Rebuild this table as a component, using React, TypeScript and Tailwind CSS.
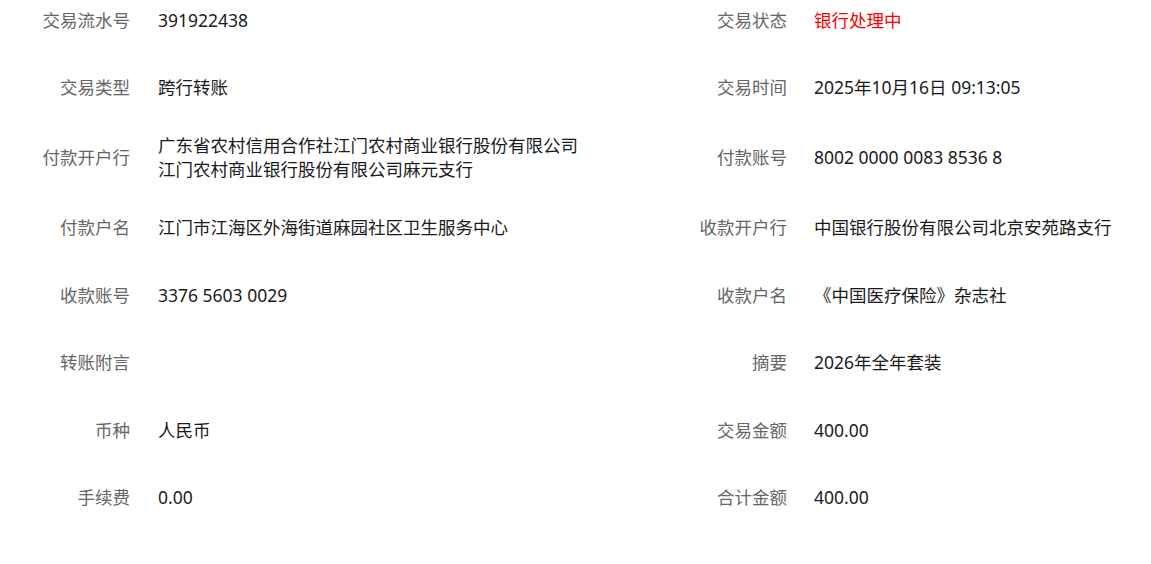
const rows: { l: string; lv: string[]; r: string; rv: string; red?: boolean }[] = [
  { l: "交易流水号", lv: ["391922438"], r: "交易状态", rv: "银行处理中", red: true },
  { l: "交易类型", lv: ["跨行转账"], r: "交易时间", rv: "2025年10月16日 09:13:05" },
  {
    l: "付款开户行",
    lv: ["广东省农村信用合作社江门农村商业银行股份有限公司", "江门农村商业银行股份有限公司麻元支行"],
    r: "付款账号",
    rv: "8002 0000 0083 8536 8",
  },
  { l: "付款户名", lv: ["江门市江海区外海街道麻园社区卫生服务中心"], r: "收款开户行", rv: "中国银行股份有限公司北京安苑路支行" },
  { l: "收款账号", lv: ["3376 5603 0029"], r: "收款户名", rv: "《中国医疗保险》杂志社" },
  { l: "转账附言", lv: [""], r: "摘要", rv: "2026年全年套装" },
  { l: "币种", lv: ["人民币"], r: "交易金额", rv: "400.00" },
  { l: "手续费", lv: ["0.00"], r: "合计金额", rv: "400.00" },
];

export default function App() {
  return (
    <div
      className="w-[1151px] h-[564px] overflow-hidden bg-white text-[17.5px] leading-[24px]"
      style={{ fontFamily: '"Noto Sans", "Noto Sans CJK SC", sans-serif' }}
    >
      <div className="-mt-[14px]">
        {rows.map((row, i) => (
          <div key={i} className="grid grid-cols-[130px_526px_131px_1fr] items-center min-h-[67.6px] py-[12px]">
            <div className="text-right text-[#666] whitespace-nowrap">{row.l}</div>
            <div className="pl-[28px] text-[#1a1a1a] whitespace-nowrap">
              {row.lv.map((t, j) => (
                <div key={j}>{t}</div>
              ))}
            </div>
            <div className="text-right text-[#666] whitespace-nowrap">{row.r}</div>
            <div className={"pl-[27px] whitespace-nowrap " + (row.red ? "text-[#ff0000]" : "text-[#1a1a1a]")}>
              {row.rv}
            </div>
          </div>
        ))}
      </div>
    </div>
  );
}
